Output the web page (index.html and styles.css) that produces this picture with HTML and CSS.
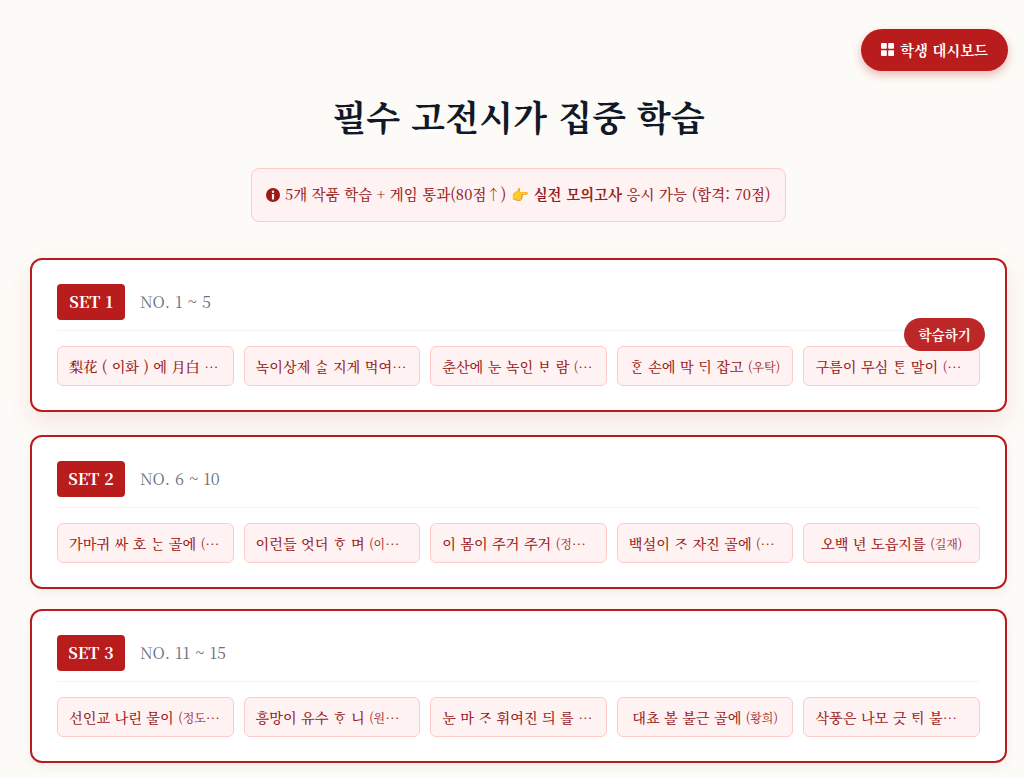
FILE: index.html
```html
<!DOCTYPE html>
<html lang="ko">
<head>
    <meta charset="UTF-8">
    <meta name="viewport" content="width=device-width, initial-scale=1.0">
    <title>필수 고전시가 집중 학습</title>
    <link rel="stylesheet" href="styles.css">
</head>
<body>
    <a class="dashboard-btn" href="#">
        <svg class="dashboard-icon" viewBox="0 0 13 13" width="13" height="13" aria-hidden="true">
            <rect x="0" y="0" width="5.8" height="5.8" rx="0.8"/>
            <rect x="7.2" y="0" width="5.8" height="5.8" rx="0.8"/>
            <rect x="0" y="7.2" width="5.8" height="5.8" rx="0.8"/>
            <rect x="7.2" y="7.2" width="5.8" height="5.8" rx="0.8"/>
        </svg>
        학생 대시보드
    </a>

    <h1 class="heading">필수 고전시가 집중 학습</h1>

    <div class="notice-wrap">
        <p class="notice">
            <svg class="notice-icon" viewBox="0 0 14 14" width="14" height="14" aria-hidden="true">
                <circle cx="7" cy="7" r="7"/>
                <circle class="dot" cx="7" cy="3.8" r="1.2"/>
                <rect class="dot" x="5.9" y="6" width="2.2" height="5.4" rx="0.5"/>
            </svg>
            5개 작품 학습 + 게임 통과(80점↑) 👉 <b>실전 모의고사</b> 응시 가능 (합격: 70점)
        </p>
    </div>

    <section class="set-card set-card-hover">
        <div class="set-header">
            <span class="set-badge">SET 1</span>
            <span class="set-range">NO. 1 ~ 5</span>
        </div>
        <div class="poem-grid">
            <div class="poem">梨花 ( 이화 ) 에 月白 <small>(이조년)</small></div>
            <div class="poem">녹이상제 ᄉᆞᆯ 지게 먹여 <small>(최영)</small></div>
            <div class="poem">춘산에 눈 녹인 ᄇᆞ 람 <small>(우탁)</small></div>
            <div class="poem">ᄒᆞᆫ 손에 막 ᄃᆡ 잡고 <small>(우탁)</small></div>
            <div class="poem">구름이 무심 ᄐᆞᆫ 말이 <small>(이존오)</small></div>
        </div>
        <span class="study-tag">학습하기</span>
    </section>

    <section class="set-card">
        <div class="set-header">
            <span class="set-badge">SET 2</span>
            <span class="set-range">NO. 6 ~ 10</span>
        </div>
        <div class="poem-grid">
            <div class="poem">가마귀 싸 호 ᄂᆞᆫ 골에 <small>(정몽주 모)</small></div>
            <div class="poem">이런들 엇더 ᄒᆞ 며 <small>(이방원)</small></div>
            <div class="poem">이 몸이 주거 주거 <small>(정몽주)</small></div>
            <div class="poem">백설이 ᄌᆞ 자진 골에 <small>(이색)</small></div>
            <div class="poem">오백 년 도읍지를 <small>(길재)</small></div>
        </div>
    </section>

    <section class="set-card">
        <div class="set-header">
            <span class="set-badge">SET 3</span>
            <span class="set-range">NO. 11 ~ 15</span>
        </div>
        <div class="poem-grid">
            <div class="poem">선인교 나린 물이 <small>(정도전)</small></div>
            <div class="poem">흥망이 유수 ᄒᆞ 니 <small>(원천석)</small></div>
            <div class="poem">눈 마 ᄌᆞ 휘여진 듸 를 <small>(원천석)</small></div>
            <div class="poem">대쵸 볼 불근 골에 <small>(황희)</small></div>
            <div class="poem">삭풍은 나모 긋 ᄐᆡ 불고 <small>(김종서)</small></div>
        </div>
    </section>
</body>
</html>
```

FILE: styles.css
```css
body {
    font-family: "Noto Serif CJK KR", "Noto Serif KR", "Liberation Serif", "Noto Sans CJK KR", serif;
    margin: 0;
    padding: 89px 17px 15px 30px;
    background: #fdfbf7;
    color: #1f2937;
}

.dashboard-btn {
    position: absolute;
    top: 29px;
    right: 16px;
    display: flex;
    align-items: center;
    gap: 6px;
    height: 40px;
    padding: 0 20px 2px;
    border-radius: 21px;
    background: #b91c1c;
    color: white;
    font-size: 14.4px;
    font-weight: bold;
    text-decoration: none;
    box-shadow: 0 4px 10px rgba(185, 28, 28, 0.3);
}

.dashboard-icon {
    fill: white;
}

.heading {
    margin: 0 0 25px;
    font-size: 35.2px;
    line-height: 54px;
    text-align: center;
    color: #111827;
}

.notice-wrap {
    display: flex;
    justify-content: center;
    margin-bottom: 39px;
}

.notice {
    margin: 0;
    padding: 0 14px;
    height: 52px;
    line-height: 50px;
    background: #fef2f2;
    border: 1px solid #fecaca;
    border-radius: 8px;
    color: #991b1b;
    font-size: 14.4px;
    font-weight: 500;
    letter-spacing: 0.08px;
}

.notice-icon {
    vertical-align: -2px;
    fill: #991b1b;
}

.notice-icon .dot {
    fill: #fef2f2;
}

.set-card {
    position: relative;
    margin-bottom: 20px;
    padding: 24px 25px;
    background: white;
    border: 2px solid #b91c1c;
    border-radius: 12px;
    box-shadow: 0 4px 12px rgba(0, 0, 0, 0.05);
}

.set-card-hover {
    transform: translateY(-3px);
    box-shadow: 0 10px 25px rgba(185, 28, 28, 0.1);
}

.set-header {
    display: flex;
    align-items: center;
    gap: 15px;
    padding-bottom: 10px;
    margin-bottom: 15px;
    border-bottom: 1px solid #f3f4f6;
}

.set-badge {
    display: flex;
    align-items: center;
    justify-content: center;
    width: 68px;
    height: 34px;
    padding-bottom: 2px;
    background: #b91c1c;
    border-radius: 4px;
    color: white;
    font-size: 16px;
    font-weight: bold;
}

.set-range {
    padding-bottom: 2px;
    color: #6b7280;
    font-size: 16px;
}

.poem-grid {
    display: grid;
    grid-template-columns: repeat(5, 1fr);
    gap: 10px;
}

.poem {
    min-width: 0;
    height: 38px;
    line-height: 38px;
    padding: 0 11px;
    background: #fef2f2;
    border: 1px solid #fecaca;
    border-radius: 6px;
    color: #991b1b;
    font-size: 14.2px;
    font-weight: 500;
    text-align: center;
    white-space: nowrap;
    overflow: hidden;
    text-overflow: ellipsis;
}

.poem small {
    font-size: 12px;
    font-weight: normal;
}

.study-tag {
    position: absolute;
    right: 20px;
    bottom: 59px;
    padding: 0 14px;
    height: 33px;
    line-height: 33px;
    border-radius: 17px;
    background: #b91c1c;
    color: white;
    font-size: 13.6px;
    font-weight: bold;
    opacity: 0.95;
}
```
